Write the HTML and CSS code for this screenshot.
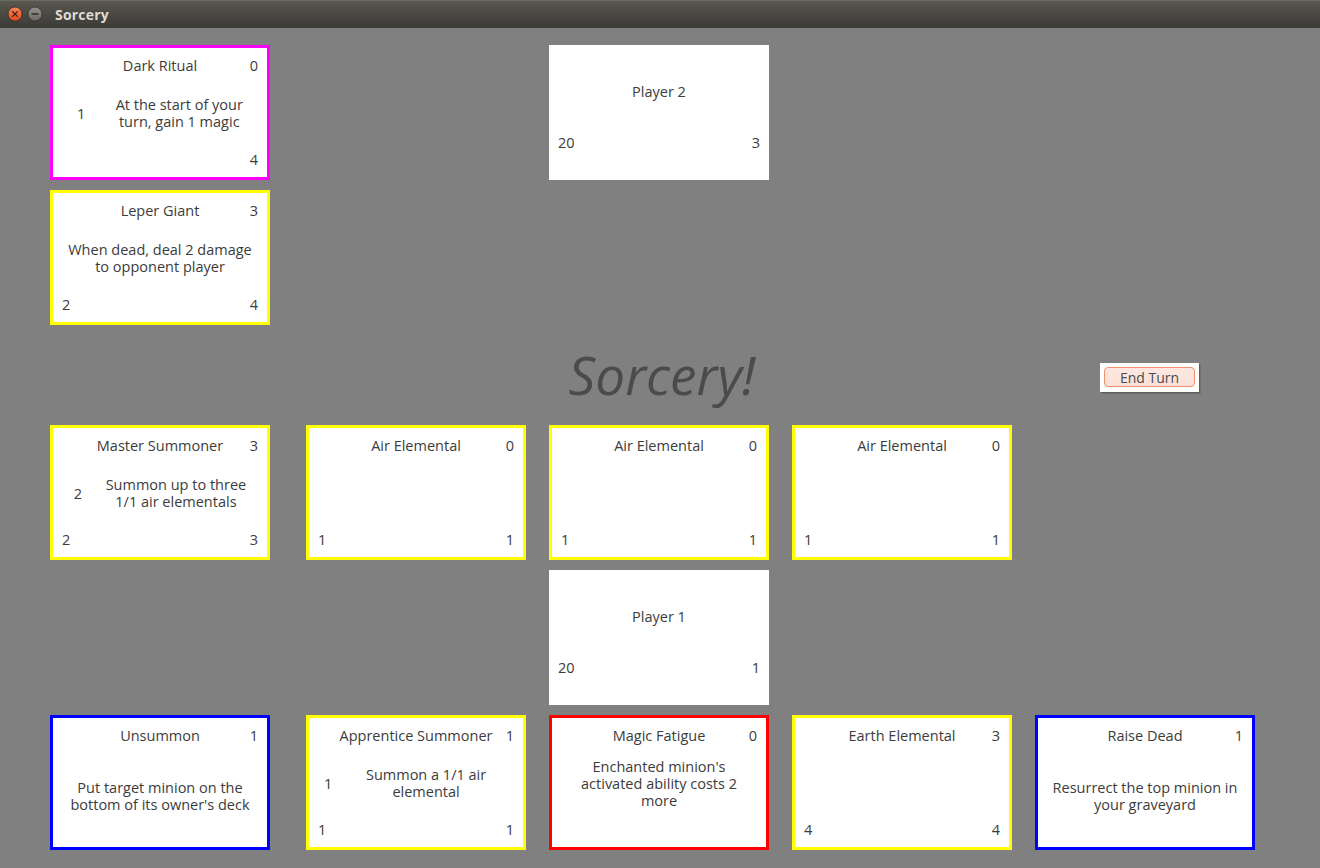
FILE: index.html
```html
<!DOCTYPE html>
<html>
<head>
<meta charset="utf-8">
<title>Sorcery</title>
<link rel="stylesheet" href="styles.css">
</head>
<body>
<div class="window">
  <header class="titlebar">
    <div class="wbtns">
      <svg class="wbtn" width="16" height="16" viewBox="0 0 16 16">
        <defs>
          <linearGradient id="gc" x1="0" y1="0" x2="0" y2="1">
            <stop offset="0" stop-color="#f7865a"/>
            <stop offset="1" stop-color="#e04a1a"/>
          </linearGradient>
          <linearGradient id="gm" x1="0" y1="0" x2="0" y2="1">
            <stop offset="0" stop-color="#94928c"/>
            <stop offset="1" stop-color="#6c6a65"/>
          </linearGradient>
        </defs>
        <circle cx="8" cy="8" r="7" fill="url(#gc)" stroke="#3a2a22" stroke-width="0.8"/>
        <path d="M5.6 5.6 L10.4 10.4 M10.4 5.6 L5.6 10.4" stroke="#3b1f14" stroke-width="1.3" stroke-linecap="round"/>
      </svg>
      <svg class="wbtn" width="16" height="16" viewBox="0 0 16 16">
        <circle cx="8" cy="8" r="7" fill="url(#gm)" stroke="#33322e" stroke-width="0.8"/>
        <path d="M5 8 H11" stroke="#2e2d2a" stroke-width="1.4" stroke-linecap="round"/>
      </svg>
    </div>
    <span class="wtitle">Sorcery</span>
  </header>

  <main class="board">
    <!-- row 1 -->
    <div class="card magenta r1 c1">
      <div class="top"><span class="name">Dark Ritual</span><span class="cost">0</span></div>
      <div class="mid"><span class="acost">1</span><span class="desc">At the start of your<br>turn, gain 1 magic</span></div>
      <div class="bot"><span></span><span>4</span></div>
    </div>
    <div class="player r1 c3">
      <div class="pname">Player 2</div>
      <div class="pstats"><span>20</span><span>3</span></div>
    </div>

    <!-- row 2 -->
    <div class="card yellow r2 c1">
      <div class="top"><span class="name">Leper Giant</span><span class="cost">3</span></div>
      <div class="mid solo"><span class="desc">When dead, deal 2 damage<br>to opponent player</span></div>
      <div class="bot"><span>2</span><span>4</span></div>
    </div>

    <!-- middle -->
    <h1 class="logo rm c3">Sorcery!</h1>
    <div class="endwrap rm c5">
      <button class="endturn" type="button">End Turn</button>
    </div>

    <!-- row 3 -->
    <div class="card yellow r3 c1">
      <div class="top"><span class="name">Master Summoner</span><span class="cost">3</span></div>
      <div class="mid"><span class="acost">2</span><span class="desc">Summon up to three<br>1/1 air elementals</span></div>
      <div class="bot"><span>2</span><span>3</span></div>
    </div>
    <div class="card yellow r3 c2">
      <div class="top"><span class="name">Air Elemental</span><span class="cost">0</span></div>
      <div class="mid solo"></div>
      <div class="bot"><span>1</span><span>1</span></div>
    </div>
    <div class="card yellow r3 c3">
      <div class="top"><span class="name">Air Elemental</span><span class="cost">0</span></div>
      <div class="mid solo"></div>
      <div class="bot"><span>1</span><span>1</span></div>
    </div>
    <div class="card yellow r3 c4">
      <div class="top"><span class="name">Air Elemental</span><span class="cost">0</span></div>
      <div class="mid solo"></div>
      <div class="bot"><span>1</span><span>1</span></div>
    </div>

    <!-- row 4 -->
    <div class="player r4 c3">
      <div class="pname">Player 1</div>
      <div class="pstats"><span>20</span><span>1</span></div>
    </div>

    <!-- row 5 -->
    <div class="card blue spell r5 c1">
      <div class="top"><span class="name">Unsummon</span><span class="cost">1</span></div>
      <div class="mid solo"><span class="desc">Put target minion on the<br>bottom of its owner's deck</span></div>
    </div>
    <div class="card yellow r5 c2">
      <div class="top"><span class="name">Apprentice Summoner</span><span class="cost">1</span></div>
      <div class="mid"><span class="acost">1</span><span class="desc wide">Summon a 1/1 air<br>elemental</span></div>
      <div class="bot"><span>1</span><span>1</span></div>
    </div>
    <div class="card red r5 c3">
      <div class="top"><span class="name">Magic Fatigue</span><span class="cost">0</span></div>
      <div class="mid solo"><span class="desc">Enchanted minion's<br>activated ability costs 2<br>more</span></div>
      <div class="bot"><span></span><span></span></div>
    </div>
    <div class="card yellow r5 c4">
      <div class="top"><span class="name">Earth Elemental</span><span class="cost">3</span></div>
      <div class="mid solo"></div>
      <div class="bot"><span>4</span><span>4</span></div>
    </div>
    <div class="card blue spell r5 c5">
      <div class="top"><span class="name">Raise Dead</span><span class="cost">1</span></div>
      <div class="mid solo"><span class="desc">Resurrect the top minion in<br>your graveyard</span></div>
    </div>
  </main>
</div>
</body>
</html>
```

FILE: styles.css
```css
* { box-sizing: border-box; }

html, body {
  margin: 0;
  padding: 0;
  width: 1320px;
  height: 868px;
  overflow: hidden;
  background: #808080;
  font-family: "Open Sans", "Noto Sans", sans-serif;
}

.window {
  width: 1320px;
  height: 868px;
  display: flex;
  flex-direction: column;
}

/* ---------- title bar ---------- */
.titlebar {
  height: 28px;
  flex: 0 0 28px;
  display: flex;
  align-items: center;
  background: linear-gradient(#59584f 0%, #4a4944 45%, #3c3b37 100%);
  border-top: 1px solid #6b6a63;
  padding-left: 7px;
}

.wbtns {
  display: flex;
  gap: 4px;
  margin-top: -1px;
}

.wbtn { display: block; }

.wtitle {
  margin-left: 12px;
  color: #dfdbd2;
  font-weight: 700;
  font-size: 14px;
  letter-spacing: 0.2px;
  margin-top: -1px;
}

/* ---------- board grid ---------- */
.board {
  display: grid;
  grid-template-columns: 256px 243px 243px 243px 220px;
  grid-template-rows: 135px 135px 80px 135px 135px 135px;
  row-gap: 10px;
  padding: 17px 0 0 50px;
}

.r1 { grid-row: 1; }
.r2 { grid-row: 2; }
.rm { grid-row: 3; }
.r3 { grid-row: 4; }
.r4 { grid-row: 5; }
.r5 { grid-row: 6; }
.c1 { grid-column: 1; }
.c2 { grid-column: 2; }
.c3 { grid-column: 3; }
.c4 { grid-column: 4; }
.c5 { grid-column: 5; }

/* ---------- cards ---------- */
.card {
  width: 220px;
  height: 135px;
  background: #ffffff;
  border: 3px solid #ffff00;
  padding: 9px 9px 9px;
  display: flex;
  flex-direction: column;
  color: #3c3c3c;
  font-size: 14.5px;
  line-height: 17px;
}

.card.magenta { border-color: #ff00ff; }
.card.yellow { border-color: #ffff00; }
.card.blue { border-color: #0000ff; }
.card.red { border-color: #ff0000; }
.card.spell { padding-bottom: 1px; }

.top {
  display: grid;
  grid-template-columns: 1fr auto 1fr;
  align-items: start;
  height: 19px;
}
.top .name { grid-column: 2; white-space: nowrap; }
.top .cost { grid-column: 3; justify-self: end; }

.mid {
  flex: 1;
  display: flex;
  align-items: center;
  justify-content: space-around;
}
.mid.solo { justify-content: center; }

.desc {
  text-align: center;
  white-space: nowrap;
}
.desc.wide { min-width: 164px; }

.bot {
  display: flex;
  justify-content: space-between;
  height: 17px;
  margin-top: 1px;
}

/* ---------- player boxes ---------- */
.player {
  width: 220px;
  height: 135px;
  background: #ffffff;
  color: #3c3c3c;
  font-size: 14.5px;
  line-height: 17px;
  padding: 38px 9px 0 9px;
  display: flex;
  flex-direction: column;
}
.pname { text-align: center; }
.pstats {
  margin-top: 34px;
  display: flex;
  justify-content: space-between;
}

/* ---------- middle strip ---------- */
.logo {
  width: 220px;
  margin: 0;
  align-self: center;
  text-align: center;
  font-family: "Open Sans", "Noto Sans", sans-serif;
  font-style: italic;
  font-weight: 400;
  font-size: 53px;
  line-height: 60px;
  color: #4b4b4b;
  padding-left: 6px;
  white-space: nowrap;
}

.endwrap {
  align-self: center;
  justify-self: start;
  margin-left: 65px;
  margin-top: 5px;
  width: 99px;
  height: 29px;
  background: #ffffff;
  box-shadow: 1px 1px 0 #5e5e5e, 2px 2px 0 #707070;
  padding: 4px;
}

.endturn {
  display: block;
  width: 91px;
  height: 20px;
  border: 1px solid #f2926a;
  border-radius: 4px;
  background: linear-gradient(#fde8e1, #fbe0d7);
  color: #4a4a4a;
  font-family: "Open Sans", "Noto Sans", sans-serif;
  font-size: 14px;
  line-height: 17px;
  padding: 1px 0 0;
  text-align: center;
}
```
